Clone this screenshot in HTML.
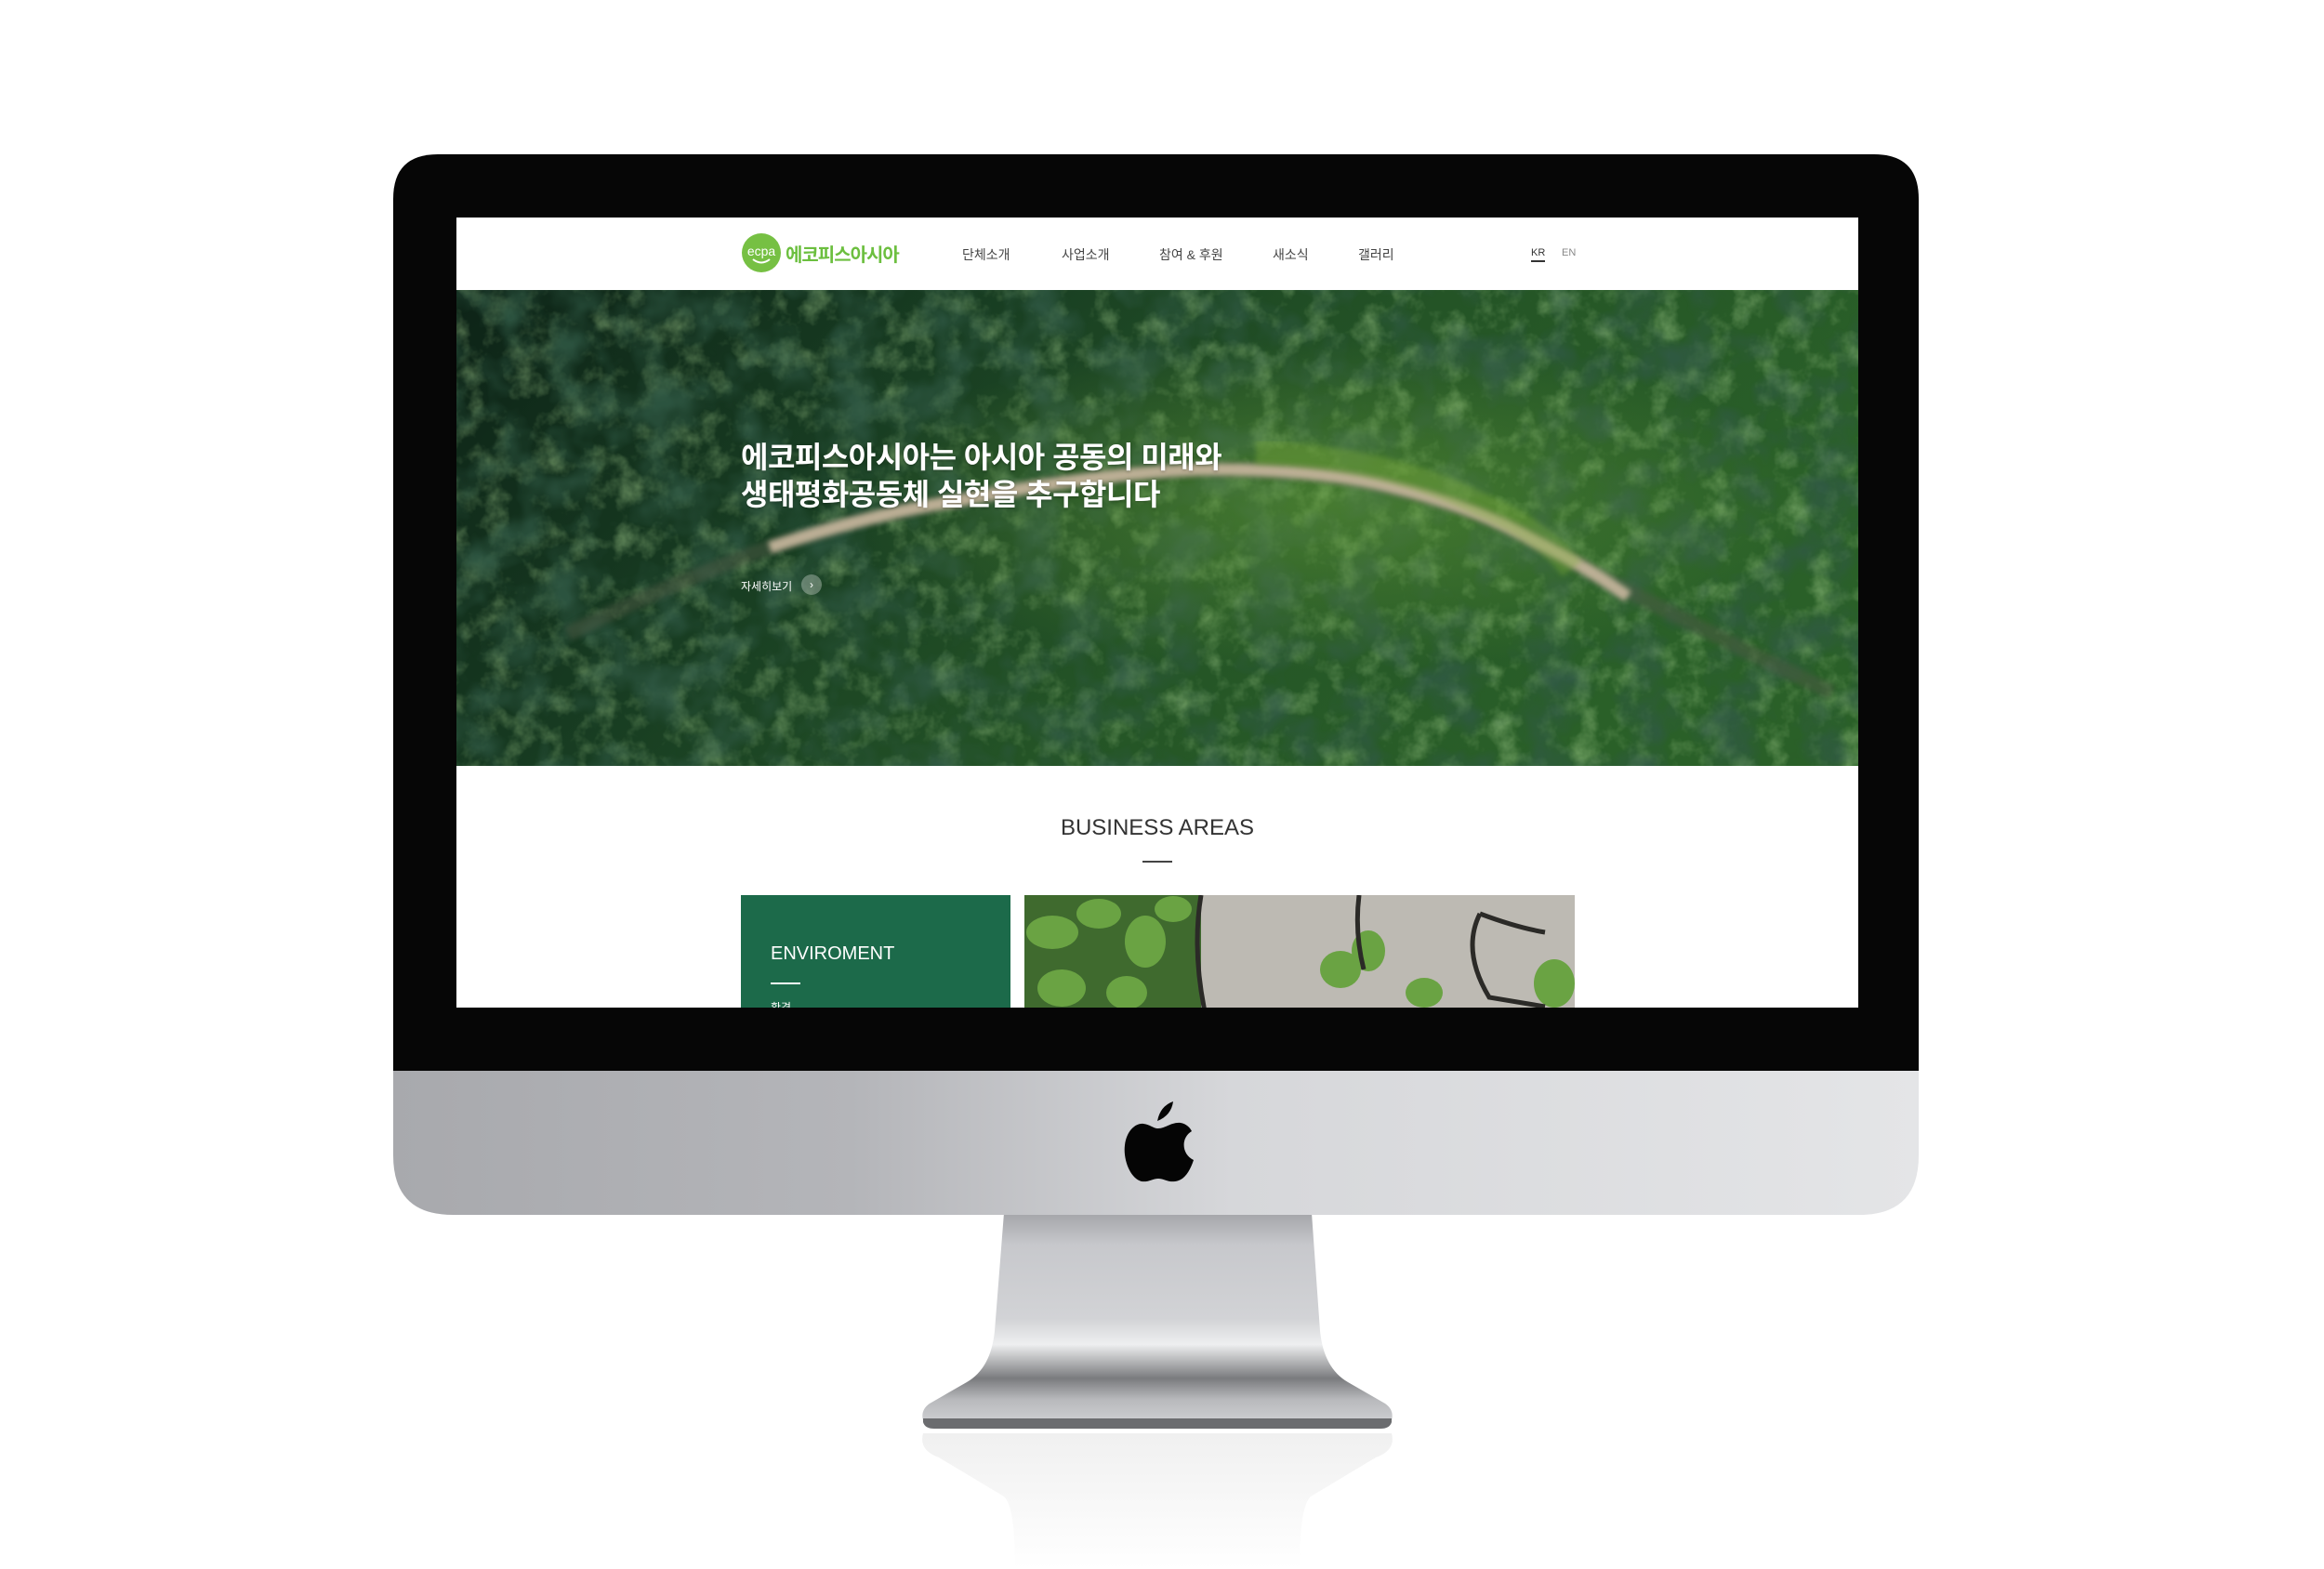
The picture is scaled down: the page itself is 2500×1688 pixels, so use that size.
<!DOCTYPE html>
<html><head><meta charset="utf-8">
<style>
html,body{margin:0;padding:0;background:#fff;}
body{width:2500px;height:1688px;position:relative;overflow:hidden;font-family:"Liberation Sans","Noto Sans CJK KR",sans-serif;}
#mon{position:absolute;left:0;top:0;}
#screen{position:absolute;left:491px;top:234px;width:1508px;height:850px;background:#fff;overflow:hidden;}
.hdr{position:absolute;left:0;top:0;width:1508px;height:78px;background:#fff;}
.nav{position:absolute;top:30px;font-size:14px;color:#444;}
.hero{position:absolute;left:0;top:78px;width:1508px;height:512px;}
.h1{position:absolute;left:306px;top:160px;color:#fff;font-size:32px;font-weight:bold;line-height:40px;letter-spacing:-0.5px;text-shadow:0 1px 3px rgba(0,0,0,.3);}
</style></head><body>
<svg id="mon" width="2500" height="1688" viewBox="0 0 2500 1688">
<defs>
<linearGradient id="chin" x1="0" x2="1" y1="0" y2="0">
<stop offset="0" stop-color="#a8a9ad"/><stop offset=".3" stop-color="#b4b5b9"/><stop offset=".55" stop-color="#d6d7da"/><stop offset="1" stop-color="#e4e5e7"/></linearGradient>
<linearGradient id="neck" x1="0" x2="0" y1="0" y2="1">
<stop offset="0" stop-color="#a4a5a9"/><stop offset=".15" stop-color="#c7c8cc"/><stop offset=".5" stop-color="#d2d3d6"/><stop offset=".62" stop-color="#eeeff0"/><stop offset=".78" stop-color="#7a7b7e"/><stop offset=".88" stop-color="#b8b9bc"/><stop offset="1" stop-color="#d0d1d4"/></linearGradient>
<linearGradient id="refl" x1="0" x2="0" y1="0" y2="1">
<stop offset="0" stop-color="#f0f0f0"/><stop offset="1" stop-color="#fff"/></linearGradient>
</defs>
<path d="M993 1542 L1497 1542 Q1502 1560 1480 1568 L1410 1610 Q1398 1620 1398 1688 L1092 1688 Q1092 1620 1080 1610 L1010 1568 Q988 1560 993 1542Z" fill="url(#refl)"/>
<path d="M1080 1305 L1411 1305 L1420 1432 Q1424 1472 1450 1487 L1490 1510 Q1500 1517 1497 1528 Q1495 1533 1485 1533 L1005 1533 Q995 1533 993 1528 Q990 1517 1000 1510 L1040 1487 Q1066 1472 1070 1432Z" fill="url(#neck)"/>
<path d="M993 1526 L1497 1526 L1497 1530 Q1495 1537 1485 1537 L1005 1537 Q995 1537 993 1530Z" fill="#6b6c6f"/>
<path d="M423 1150 L2064 1150 L2064 1243 Q2064 1307 2000 1307 L487 1307 Q423 1307 423 1243Z" fill="url(#chin)"/>
<path d="M471 166 L2016 166 Q2064 166 2064 214 L2064 1152 L423 1152 L423 214 Q423 166 471 166Z" fill="#060606"/>
<g transform="translate(1246,1228)" fill="#050505">
<path d="M-1 -22 Q2 -38 16 -43 Q14 -28 -1 -22Z"/>
<path d="M0 -14 C8 -14 14 -21 24 -20 C30 -19 34 -15 36 -11 C24 -4 25 14 38 20 C34 32 28 42 18 43 C10 44 6 40 0 40 C-6 40 -10 44 -18 43 C-30 40 -38 20 -36 4 C-34 -12 -24 -20 -16 -19 C-8 -18 -6 -14 0 -14Z"/>
</g>
</svg>
<div id="screen">
<div class="hdr">
 <svg style="position:absolute;left:307px;top:17px" width="42" height="42" viewBox="0 0 42 42"><circle cx="21" cy="21" r="21" fill="#76c043"/><text x="21" y="24" fill="#fff" font-size="14" font-family="Liberation Sans" text-anchor="middle">ecpa</text><path d="M12 28 Q21 35 30 28" stroke="#fff" stroke-width="2" fill="none"/></svg>
 <div style="position:absolute;left:354px;top:24px;font-size:20px;font-weight:bold;color:#6cbf3f;letter-spacing:-1px">에코피스아시아</div>
 <div class="nav" style="left:544px">단체소개</div>
 <div class="nav" style="left:651px">사업소개</div>
 <div class="nav" style="left:756px">참여 &amp; 후원</div>
 <div class="nav" style="left:878px">새소식</div>
 <div class="nav" style="left:970px">갤러리</div>
 <div class="nav" style="left:1156px;font-size:11px;top:32px;color:#333;border-bottom:2px solid #333;padding-bottom:2px">KR</div>
 <div class="nav" style="left:1189px;font-size:11px;top:32px;color:#888">EN</div>
</div>
<div class="hero">
<svg width="1508" height="512" viewBox="0 0 1508 512">
<defs>
<linearGradient id="hg" x1="0" x2="1" y1="0" y2="0.3"><stop offset="0" stop-color="#0d2317"/><stop offset=".35" stop-color="#183d22"/><stop offset=".65" stop-color="#245426"/><stop offset="1" stop-color="#2a6028"/></linearGradient>
<radialGradient id="lit" cx=".62" cy=".45" r=".35"><stop offset="0" stop-color="#6fa83c" stop-opacity=".45"/><stop offset="1" stop-color="#6fa83c" stop-opacity="0"/></radialGradient>
<filter id="bl"><feGaussianBlur stdDeviation="3"/></filter>
<filter id="tx"><feTurbulence type="fractalNoise" baseFrequency="0.035" numOctaves="4" seed="7"/><feColorMatrix values="0 0 0 0 0.42  0 0 0 0 0.68  0 0 0 0 0.3  0 0 0 2.2 -1.0"/></filter>
<filter id="tx2"><feTurbulence type="fractalNoise" baseFrequency="0.02" numOctaves="3" seed="2"/><feColorMatrix values="0 0 0 0 0.03  0 0 0 0 0.1  0 0 0 0 0.06  0 0 0 2.4 -1.0"/></filter>
</defs>
<rect width="1508" height="512" fill="url(#hg)"/>
<rect width="1508" height="512" filter="url(#tx)" opacity=".45"/>
<rect width="1508" height="512" filter="url(#tx2)" opacity=".85"/>
<rect width="1508" height="512" fill="url(#lit)"/>
<path d="M120 370 Q220 320 337 277 Q450 240 538 227 Q680 198 800 193 Q930 192 1010 213 Q1100 235 1160 270 Q1250 320 1346 367 Q1420 405 1480 433" stroke="#4d5a45" stroke-width="16" fill="none" opacity=".5" filter="url(#bl)"/>
<path d="M337 277 Q450 240 538 227 Q680 198 800 193 Q930 192 1010 213 Q1100 235 1160 270 Q1220 300 1260 330" stroke="#c2b39a" stroke-width="13" fill="none" filter="url(#bl)" opacity=".95"/>
<path d="M860 175 Q1000 180 1100 230 Q1170 260 1200 300" stroke="#7fae3c" stroke-width="26" fill="none" opacity=".4" filter="url(#bl)"/>
</svg>
<div class="h1">에코피스아시아는 아시아 공동의 미래와<br>생태평화공동체 실현을 추구합니다</div>
<div style="position:absolute;left:306px;top:310px;color:#fff;font-size:12px">자세히보기</div>
<div style="position:absolute;left:371px;top:306px;width:22px;height:22px;border-radius:50%;background:rgba(255,255,255,.3);color:#fff;font-size:12px;text-align:center;line-height:22px">›</div>
</div>
<div style="position:absolute;left:0;width:1508px;top:643px;text-align:center;font-size:24px;color:#333;">BUSINESS AREAS</div>
<div style="position:absolute;left:738px;top:692px;width:32px;height:2px;background:#444"></div>
<div style="position:absolute;left:306px;top:729px;width:290px;height:140px;background:#1c6a4a;">
 <div style="position:absolute;left:32px;top:52px;color:#fff;font-size:20px">ENVIROMENT</div>
 <div style="position:absolute;left:32px;top:94px;width:32px;height:2px;background:#fff"></div>
 <div style="position:absolute;left:32px;top:112px;color:#fff;font-size:12px">환경</div>
</div>
<svg style="position:absolute;left:611px;top:729px" width="592" height="130" viewBox="0 0 592 130">
<rect width="592" height="130" fill="#bdbab3"/>
<rect width="190" height="130" fill="#3f6a2e"/>
<g fill="#6aa343">
<ellipse cx="30" cy="40" rx="28" ry="18"/><ellipse cx="80" cy="20" rx="24" ry="16"/><ellipse cx="130" cy="50" rx="22" ry="28"/>
<ellipse cx="40" cy="100" rx="26" ry="20"/><ellipse cx="110" cy="105" rx="22" ry="18"/><ellipse cx="160" cy="15" rx="20" ry="14"/>
<ellipse cx="340" cy="80" rx="22" ry="20"/><ellipse cx="370" cy="60" rx="18" ry="22"/><ellipse cx="430" cy="105" rx="20" ry="16"/><ellipse cx="570" cy="95" rx="22" ry="26"/>
</g>
<g stroke="#2b2a27" stroke-width="5" fill="none">
<path d="M190 0 Q180 60 195 130"/><path d="M360 0 Q355 40 365 80"/><path d="M490 20 Q470 60 500 110 L560 120"/><path d="M490 20 Q530 35 560 40"/>
</g>
</svg>
</div>
</body></html>
